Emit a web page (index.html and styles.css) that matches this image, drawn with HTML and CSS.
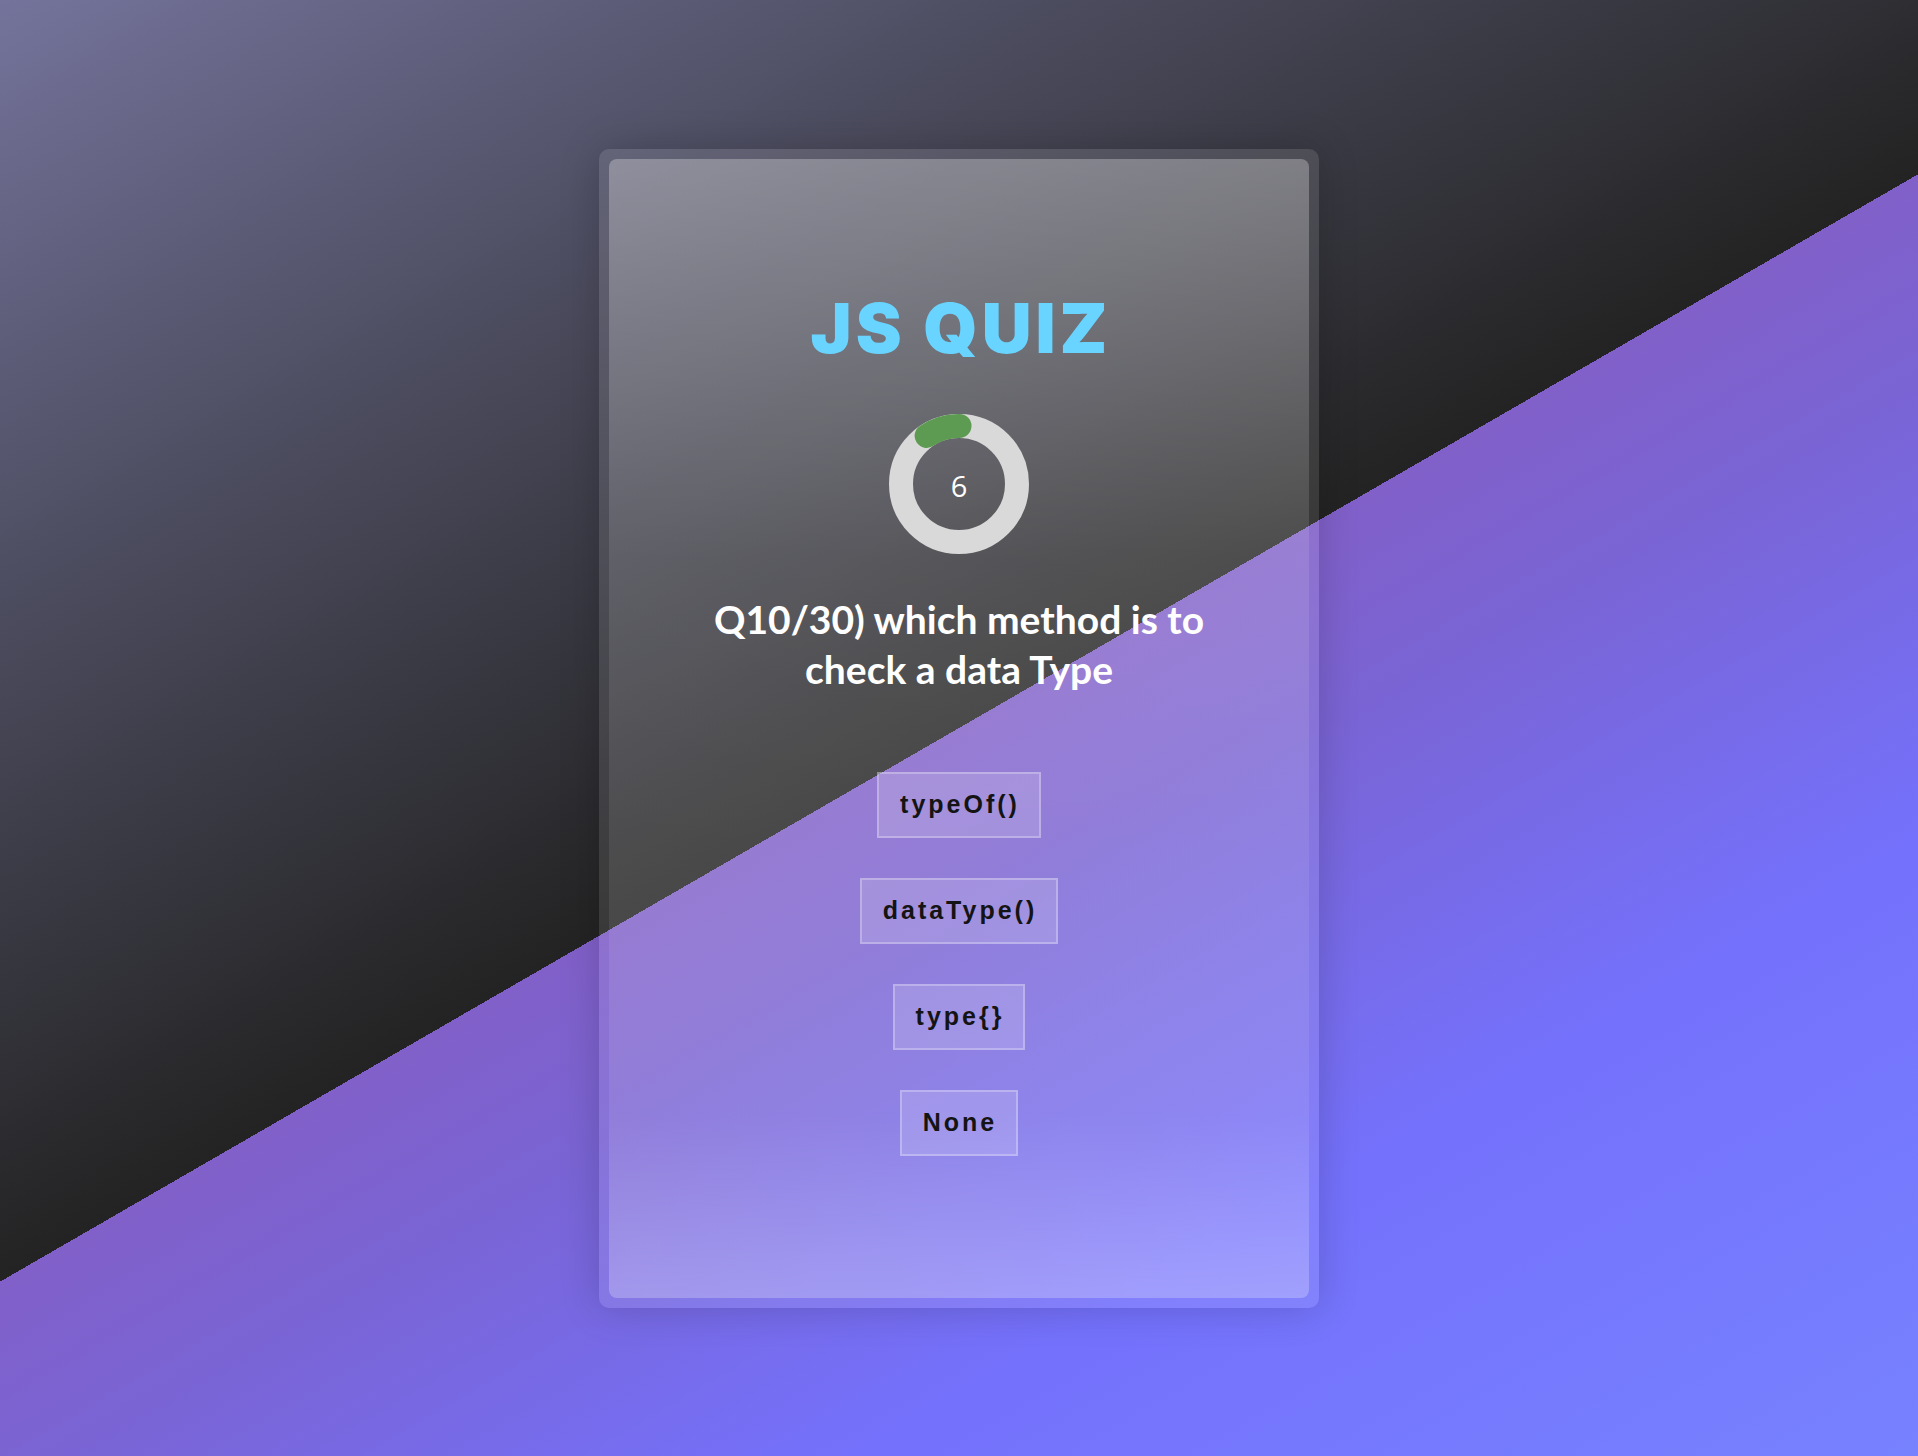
FILE: index.html
```html
<!DOCTYPE html>
<html lang="en">
<head>
<meta charset="utf-8">
<title>JS Quiz</title>
<link rel="stylesheet" href="styles.css">
</head>
<body>
<main class="frame">
  <section class="quiz">
    <h1 class="title">JS QUIZ</h1>
    <div class="timer">
      <svg class="timer-ring" width="140" height="140" viewBox="0 0 140 140">
        <circle cx="70" cy="70" r="58" fill="none" stroke="#d9d9d9" stroke-width="24"/>
        <path d="M37.6 21.9 A58 58 0 0 1 70.5 12" fill="none" stroke="#5e9b52" stroke-width="24" stroke-linecap="round"/>
      </svg>
      <span class="timer-value">6</span>
    </div>
    <h2 class="question">Q10/30) which method is to check a data Type</h2>
    <div class="options">
      <button class="option">typeOf()</button>
      <button class="option">dataType()</button>
      <button class="option">type{}</button>
      <button class="option">None</button>
    </div>
  </section>
</main>
</body>
</html>
```

FILE: styles.css
```css
html, body {
  margin: 0;
  padding: 0;
}

body {
  height: 1456px;
  display: flex;
  align-items: center;
  justify-content: center;
  font-family: "Lato", "Open Sans", sans-serif;
  background: linear-gradient(150deg, #74739b 0%, #4a4a5c 25%, #232323 50%, #8160c9 50%, #7a64d4 58%, #7471fc 76%, #7782ff 100%);
}

.frame {
  width: 720px;
  height: 1159px;
  box-sizing: border-box;
  padding: 10px;
  border-radius: 10px;
  background: rgba(255, 255, 255, 0.1);
  box-shadow: 0 0 40px rgba(0, 0, 0, 0.18);
  display: flex;
}

.quiz {
  flex: 1;
  border-radius: 8px;
  background: linear-gradient(to bottom,
    rgba(255, 255, 255, 0.28) 0%,
    rgba(255, 255, 255, 0.10) 35%,
    rgba(255, 255, 255, 0.08) 60%,
    rgba(255, 255, 255, 0.08) 84%,
    rgba(255, 255, 255, 0.24) 100%);
  display: flex;
  flex-direction: column;
  align-items: center;
}

.title {
  margin: 134px 0 0;
  padding-left: 4px;
  font-family: "Inter", "Roboto", sans-serif;
  font-weight: 900;
  font-size: 69px;
  line-height: 70px;
  letter-spacing: 4px;
  color: #68d4ff;
}

.timer {
  margin-top: 51px;
  width: 140px;
  height: 140px;
  position: relative;
  display: flex;
  align-items: center;
  justify-content: center;
}

.timer-ring {
  position: absolute;
  left: 0;
  top: 0;
}

.timer-value {
  position: relative;
  color: #ffffff;
  font-family: "Open Sans", sans-serif;
  font-size: 29px;
  line-height: 1;
  margin-top: 4px;
}

.question {
  margin: 40px 0 0;
  max-width: 540px;
  text-align: center;
  color: #ffffff;
  font-family: "Lato", sans-serif;
  font-weight: 700;
  font-size: 39px;
  line-height: 50px;
}

.options {
  margin-top: 78px;
  display: flex;
  flex-direction: column;
  align-items: center;
  gap: 40px;
}

.option {
  height: 66px;
  box-sizing: border-box;
  padding: 0 19px 0 21px;
  border: 2px solid rgba(255, 255, 255, 0.28);
  background: rgba(255, 255, 255, 0.16);
  color: #141414;
  font-family: "Liberation Sans", Arial, sans-serif;
  font-weight: 700;
  font-size: 25px;
  letter-spacing: 3px;
  cursor: pointer;
}
```
